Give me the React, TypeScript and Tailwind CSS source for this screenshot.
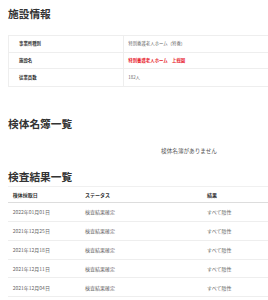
import React from "react";

const rows1 = [
  { label: "事業所種別", value: "特別養護老人ホーム（特養）", red: false },
  { label: "施設名", value: "特別養護老人ホーム　上総園", red: true },
  { label: "従業員数", value: "182人", red: false },
];

const results = [
  "2022年01月01日",
  "2021年12月25日",
  "2021年12月18日",
  "2021年12月11日",
  "2021年12月04日",
];

export default function App() {
  return (
    <div className="w-[268px] h-[300px] overflow-hidden bg-white font-['Noto_Sans_CJK_JP',sans-serif] text-[#333]">
      <div className="w-[378px] px-[8px]">
        <h2 className="pt-[5.5px] text-[10.7px] leading-[16px] font-bold text-[#333]">施設情報</h2>
        <div className="mt-[13.5px] border border-[#eee]">
          {rows1.map((r, i) => (
            <div
              key={r.label}
              className={`flex h-[16.6px] items-center ${i < rows1.length - 1 ? "border-b border-[#eee]" : ""}`}
            >
              <div className="w-[114.7px] h-full flex items-center border-r border-[#eee] pl-[10px] text-[4.4px] font-bold text-[#333]">
                {r.label}
              </div>
              <div
                className={`pl-[4.6px] text-[4.4px] ${r.red ? "font-bold text-[#e8202a]" : "text-[#666]"}`}
              >
                {r.value}
              </div>
            </div>
          ))}
        </div>

        <h2 className="mt-[29px] text-[10.7px] leading-[16px] font-bold text-[#333]">検体名簿一覧</h2>
        <div className="h-[37px] flex items-center justify-center pt-[1px]">
          <span className="text-[5.6px] text-[#555]">検体名簿がありません</span>
        </div>

        <h2 className="text-[10.7px] leading-[16px] font-bold text-[#333]">検査結果一覧</h2>
        <div className="mt-[1.5px] border-t border-[#f0f0f0]">
          <div className="grid grid-cols-[72.3px_122px_1fr] h-[16px] items-center border-b border-[#ddd] text-[5px] font-bold text-[#333]">
            <div className="pl-[4.7px]">検体採取日</div>
            <div className="pl-[4.7px]">ステータス</div>
            <div className="pl-[4.7px]">結果</div>
          </div>
          {results.map((d) => (
            <div
              key={d}
              className="grid grid-cols-[72.3px_122px_1fr] h-[18.8px] items-center border-b border-[#eee] text-[5px] text-[#666]"
            >
              <div className="pl-[4.7px]">{d}</div>
              <div className="pl-[4.7px]">検査結果確定</div>
              <div className="pl-[4.7px]">すべて陰性</div>
            </div>
          ))}
        </div>
      </div>
    </div>
  );
}
